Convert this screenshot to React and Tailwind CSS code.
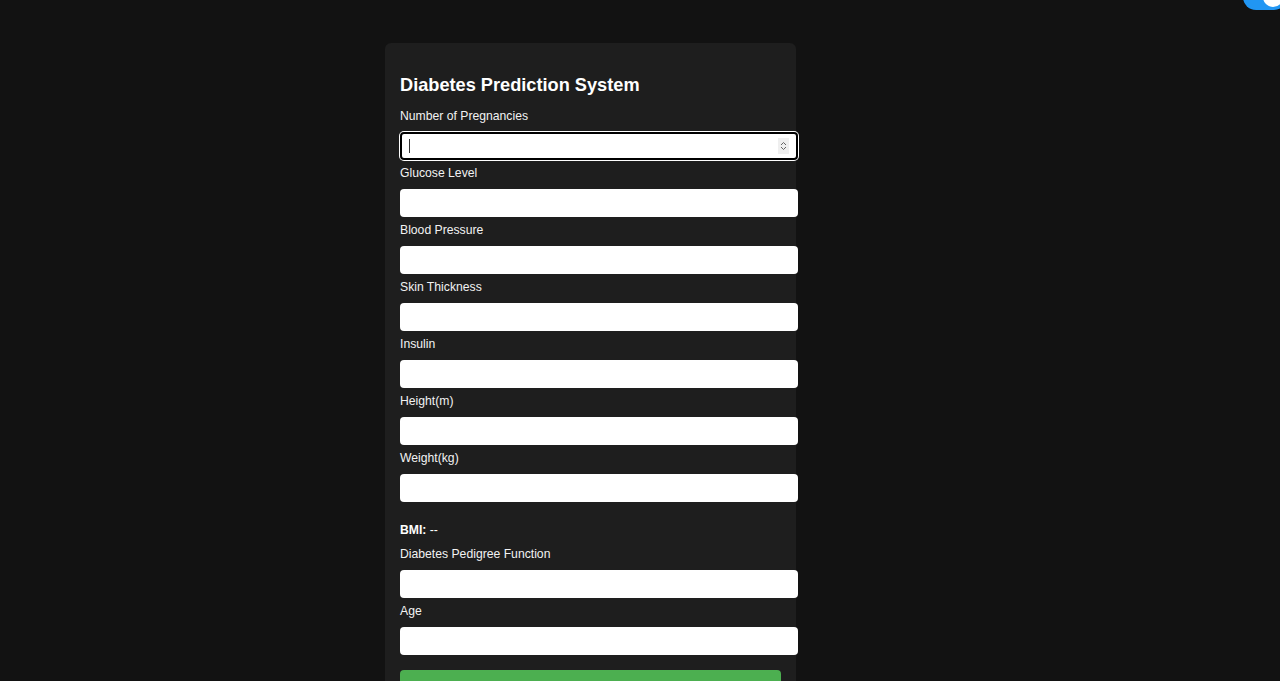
import { useState } from 'react';

const FIELDS = [
  'Number of Pregnancies',
  'Glucose Level',
  'Blood Pressure',
  'Skin Thickness',
  'Insulin',
  'Height(m)',
  'Weight(kg)',
];

const MORE_FIELDS = ['Diabetes Pedigree Function', 'Age'];

function Field({ label, focused }) {
  return (
    <div className="flex flex-col gap-[9px]">
      <label className="text-[12.2px] leading-[14px] text-[#f2f2f2]">{label}</label>
      <div className="relative w-[398px]">
        <input
          type="number"
          className={
            focused
              ? 'block h-[28px] w-full rounded-[4px] bg-white px-[8px] text-[12px] text-black outline-none shadow-[inset_0_0_0_2px_#000,0_0_0_1px_#fff]'
              : 'block h-[28px] w-full rounded-[4px] bg-white px-[8px] text-[12px] text-black outline-none'
          }
        />
        {focused && (
          <>
            {/* caret */}
            <div className="pointer-events-none absolute left-[9px] top-[7px] h-[14px] w-px bg-[#333]" />
            {/* spin buttons */}
            <div className="pointer-events-none absolute right-[9px] top-[6px] flex h-[16px] w-[11px] flex-col items-center justify-center bg-[#efefef]">
              <svg width="7" height="5" viewBox="0 0 7 5" fill="none" stroke="#666" strokeWidth="1">
                <path d="M1 4 L3.5 1.5 L6 4" />
              </svg>
              <svg width="7" height="5" viewBox="0 0 7 5" fill="none" stroke="#666" strokeWidth="1">
                <path d="M1 1 L3.5 3.5 L6 1" />
              </svg>
            </div>
          </>
        )}
      </div>
    </div>
  );
}

export default function App() {
  const [bmi] = useState('--');

  return (
    <div className="relative min-h-[681px] overflow-hidden bg-[#121212] font-['Liberation_Sans',Arial,sans-serif]">
      {/* theme toggle, partly off the top edge */}
      <div className="absolute left-[1243px] top-[-16px] h-[26px] w-[44px] rounded-full bg-[#2196f3]">
        <div className="absolute left-[20px] top-[3px] h-[20px] w-[20px] rounded-full bg-white" />
      </div>

      <div className="pl-[385px] pt-[43px]">
        <div className="flex w-[411px] flex-col rounded-[6px] bg-[#1e1e1e] px-[15px] pt-[32px] pb-[20px]">
          <h2 className="text-[18.2px] leading-[21px] font-bold text-white">Diabetes Prediction System</h2>

          <div className="mt-[13px] flex flex-col gap-[6px]">
            {FIELDS.map((f, i) => (
              <Field key={f} label={f} focused={i === 0} />
            ))}
          </div>

          <p className="mt-[21px] text-[12.2px] leading-[14px] text-white">
            <span className="font-bold">BMI:</span> {bmi}
          </p>

          <div className="mt-[10px] flex flex-col gap-[6px]">
            {MORE_FIELDS.map((f) => (
              <Field key={f} label={f} />
            ))}
          </div>

          <button className="mt-[15px] h-[34px] w-full rounded-[4px] bg-[#4caf50] text-[12px] text-white">
            Predict
          </button>
        </div>
      </div>

      <div className="absolute bottom-0 left-0 h-[6px] w-[123px] border-t border-r border-[#2a2a2a] bg-[#0a0a0a]" />
    </div>
  );
}
